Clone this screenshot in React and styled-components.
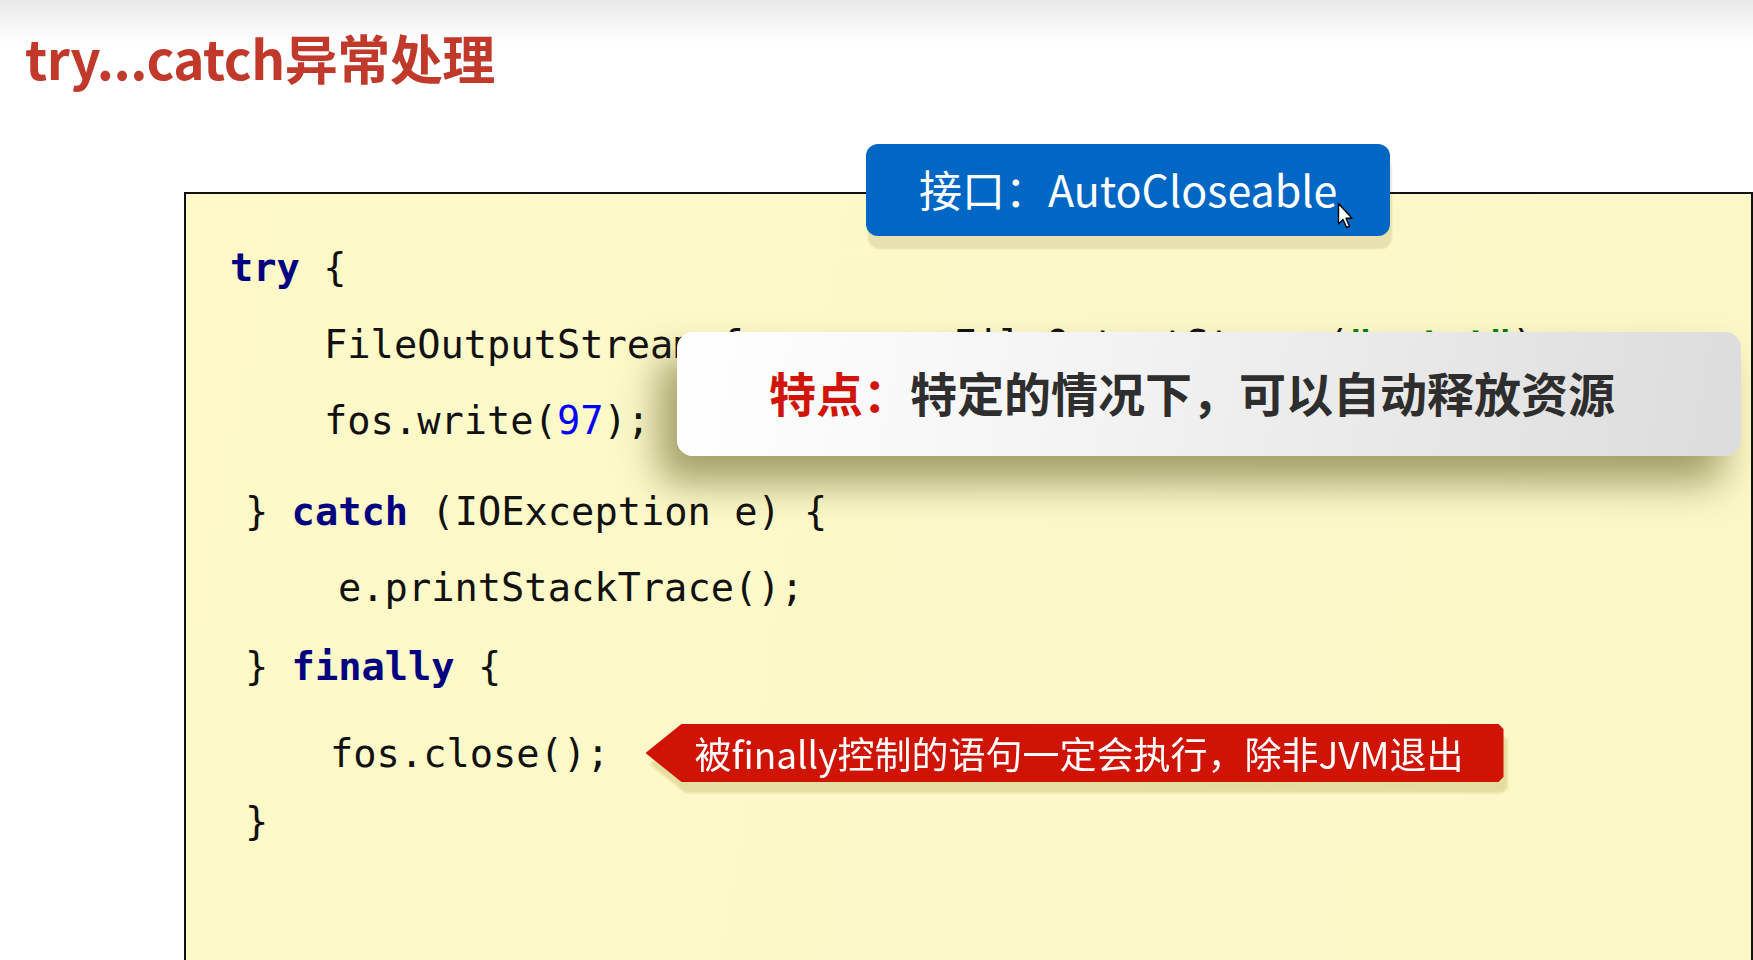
import React from "react";
import styled, { createGlobalStyle } from "styled-components";

const Global = createGlobalStyle`
  html, body { margin: 0; padding: 0; background: #fff; }
  body { font-family: "Noto Sans CJK SC", "Noto Sans", sans-serif; }
`;

const Page = styled.div`
  width: 1753px;
  height: 960px;
  overflow: hidden;
  background: linear-gradient(#e9e9e9 0px, #f8f8f8 28px, #ffffff 44px);
  display: flex;
  flex-direction: column;
`;

const Title = styled.h1`
  margin: 0;
  padding: 31px 0 0 25px;
  height: 54px;
  flex-shrink: 0;
  font-family: "Noto Sans CJK SC", "Noto Sans", sans-serif;
  font-weight: 700;
  font-size: 53px;
  line-height: 52px;
  color: #c0392b;
  letter-spacing: -0.5px;
`;

const CodeBox = styled.div`
  position: relative;
  box-sizing: border-box;
  margin: 107px 0 0 184px;
  width: 1569px;
  height: 820px;
  flex-shrink: 0;
  border: 2px solid #111;
  background: linear-gradient(100deg, #fef9c7 0%, #fdf8c9 60%, #fcf7c6 100%);
  padding: 50px 0 0 44px;
  display: flex;
  flex-direction: column;
  font-family: "DejaVu Sans Mono", "Liberation Mono", monospace;
  font-size: 38.7px;
  color: #111;
`;

const Line = styled.div`
  display: flex;
  align-items: center;
  height: ${(p) => p.$h || 46}px;
  margin-top: ${(p) => p.$mt || 0}px;
  padding-left: ${(p) => p.$indent || 0}px;
`;

const Code = styled.span`
  white-space: pre;
`;

const Kw = styled.span`
  color: #000080;
  font-weight: 700;
`;
const Num = styled.span`
  color: #0000ff;
`;
const Str = styled.span`
  color: #008000;
  font-weight: 700;
`;

const Tag = styled.div`
  position: absolute;
  left: 680px;
  top: -50px;
  width: 524px;
  height: 92px;
  box-sizing: border-box;
  padding: 0 0 5px 53px;
  display: flex;
  align-items: center;
  background: #0067c5;
  border-radius: 12px;
  box-shadow: 2px 13px 2px rgba(80, 70, 0, 0.13);
  color: #fff;
  font-family: "Noto Sans CJK SC", "Noto Sans", sans-serif;
  font-size: 43px;
  font-weight: 400;
`;

const Cursor = styled.svg`
  position: absolute;
  left: 471px;
  top: 58px;
`;

const Popup = styled.div`
  position: absolute;
  left: 491px;
  top: 138px;
  width: 1064px;
  height: 124px;
  box-sizing: border-box;
  padding: 0 0 5px 92px;
  display: flex;
  align-items: center;
  border-radius: 16px;
  background: linear-gradient(100deg, #ffffff 0%, #f3f3f3 40%, #dcdcdc 100%);
  box-shadow: -18px 26px 38px rgba(70, 70, 10, 0.5);
  font-family: "Noto Sans CJK SC", "Noto Sans", sans-serif;
  font-size: 47px;
  font-weight: 700;
  color: #2e2e2e;
`;

const Accent = styled.span`
  color: #d0140a;
`;

const CalloutWrap = styled.div`
  margin-left: 36px;
  filter: drop-shadow(4px 11px 1px rgba(150, 130, 20, 0.22));
`;

const Callout = styled.div`
  width: 858px;
  height: 58px;
  box-sizing: border-box;
  padding-left: 49px;
  display: flex;
  align-items: center;
  background: #cf1405;
  clip-path: polygon(36px 0, calc(100% - 5px) 0, 100% 5px, 100% calc(100% - 5px), calc(100% - 5px) 100%, 36px 100%, 0 50%);
  color: #fff;
  font-family: "Noto Sans CJK SC", "Noto Sans", sans-serif;
  font-size: 37px;
  font-weight: 400;
  white-space: nowrap;
`;

export default function App() {
  return (
    <>
      <Global />
      <Page>
        <Title>try...catch异常处理</Title>
        <CodeBox>
          <Line>
            <Code>
              <Kw>try</Kw>{" {"}
            </Code>
          </Line>
          <Line $mt={31} $indent={94}>
            <Code>
              {"FileOutputStream fos = "}<Kw>new</Kw>{" FileOutputStream("}<Str>"a.txt"</Str>{");"}
            </Code>
          </Line>
          <Line $mt={30} $indent={94}>
            <Code>
              {"fos.write("}<Num>97</Num>{");"}
            </Code>
          </Line>
          <Line $mt={45} $indent={15}>
            <Code>
              {"} "}<Kw>catch</Kw>{" (IOException e) {"}
            </Code>
          </Line>
          <Line $mt={30} $indent={108}>
            <Code>e.printStackTrace();</Code>
          </Line>
          <Line $mt={33} $indent={15}>
            <Code>
              {"} "}<Kw>finally</Kw>{" {"}
            </Code>
          </Line>
          <Line $mt={35} $h={58} $indent={100}>
            <Code>fos.close();</Code>
            <CalloutWrap>
              <Callout>被finally控制的语句一定会执行，除非JVM退出</Callout>
            </CalloutWrap>
          </Line>
          <Line $mt={16} $indent={15}>
            <Code>{"}"}</Code>
          </Line>

          <Tag>
            接口：AutoCloseable
            <Cursor width="18" height="28" viewBox="0 0 18 28">
              <path
                d="M1.5 1.5 L1.5 22 L6 17.5 L9.5 25.5 L12.5 24.2 L9 16.3 L15 16.3 Z"
                fill="#fff"
                stroke="#000"
                strokeWidth="1.4"
                strokeLinejoin="round"
              />
            </Cursor>
          </Tag>

          <Popup>
            <Accent>特点：</Accent>特定的情况下，可以自动释放资源
          </Popup>
        </CodeBox>
      </Page>
    </>
  );
}
